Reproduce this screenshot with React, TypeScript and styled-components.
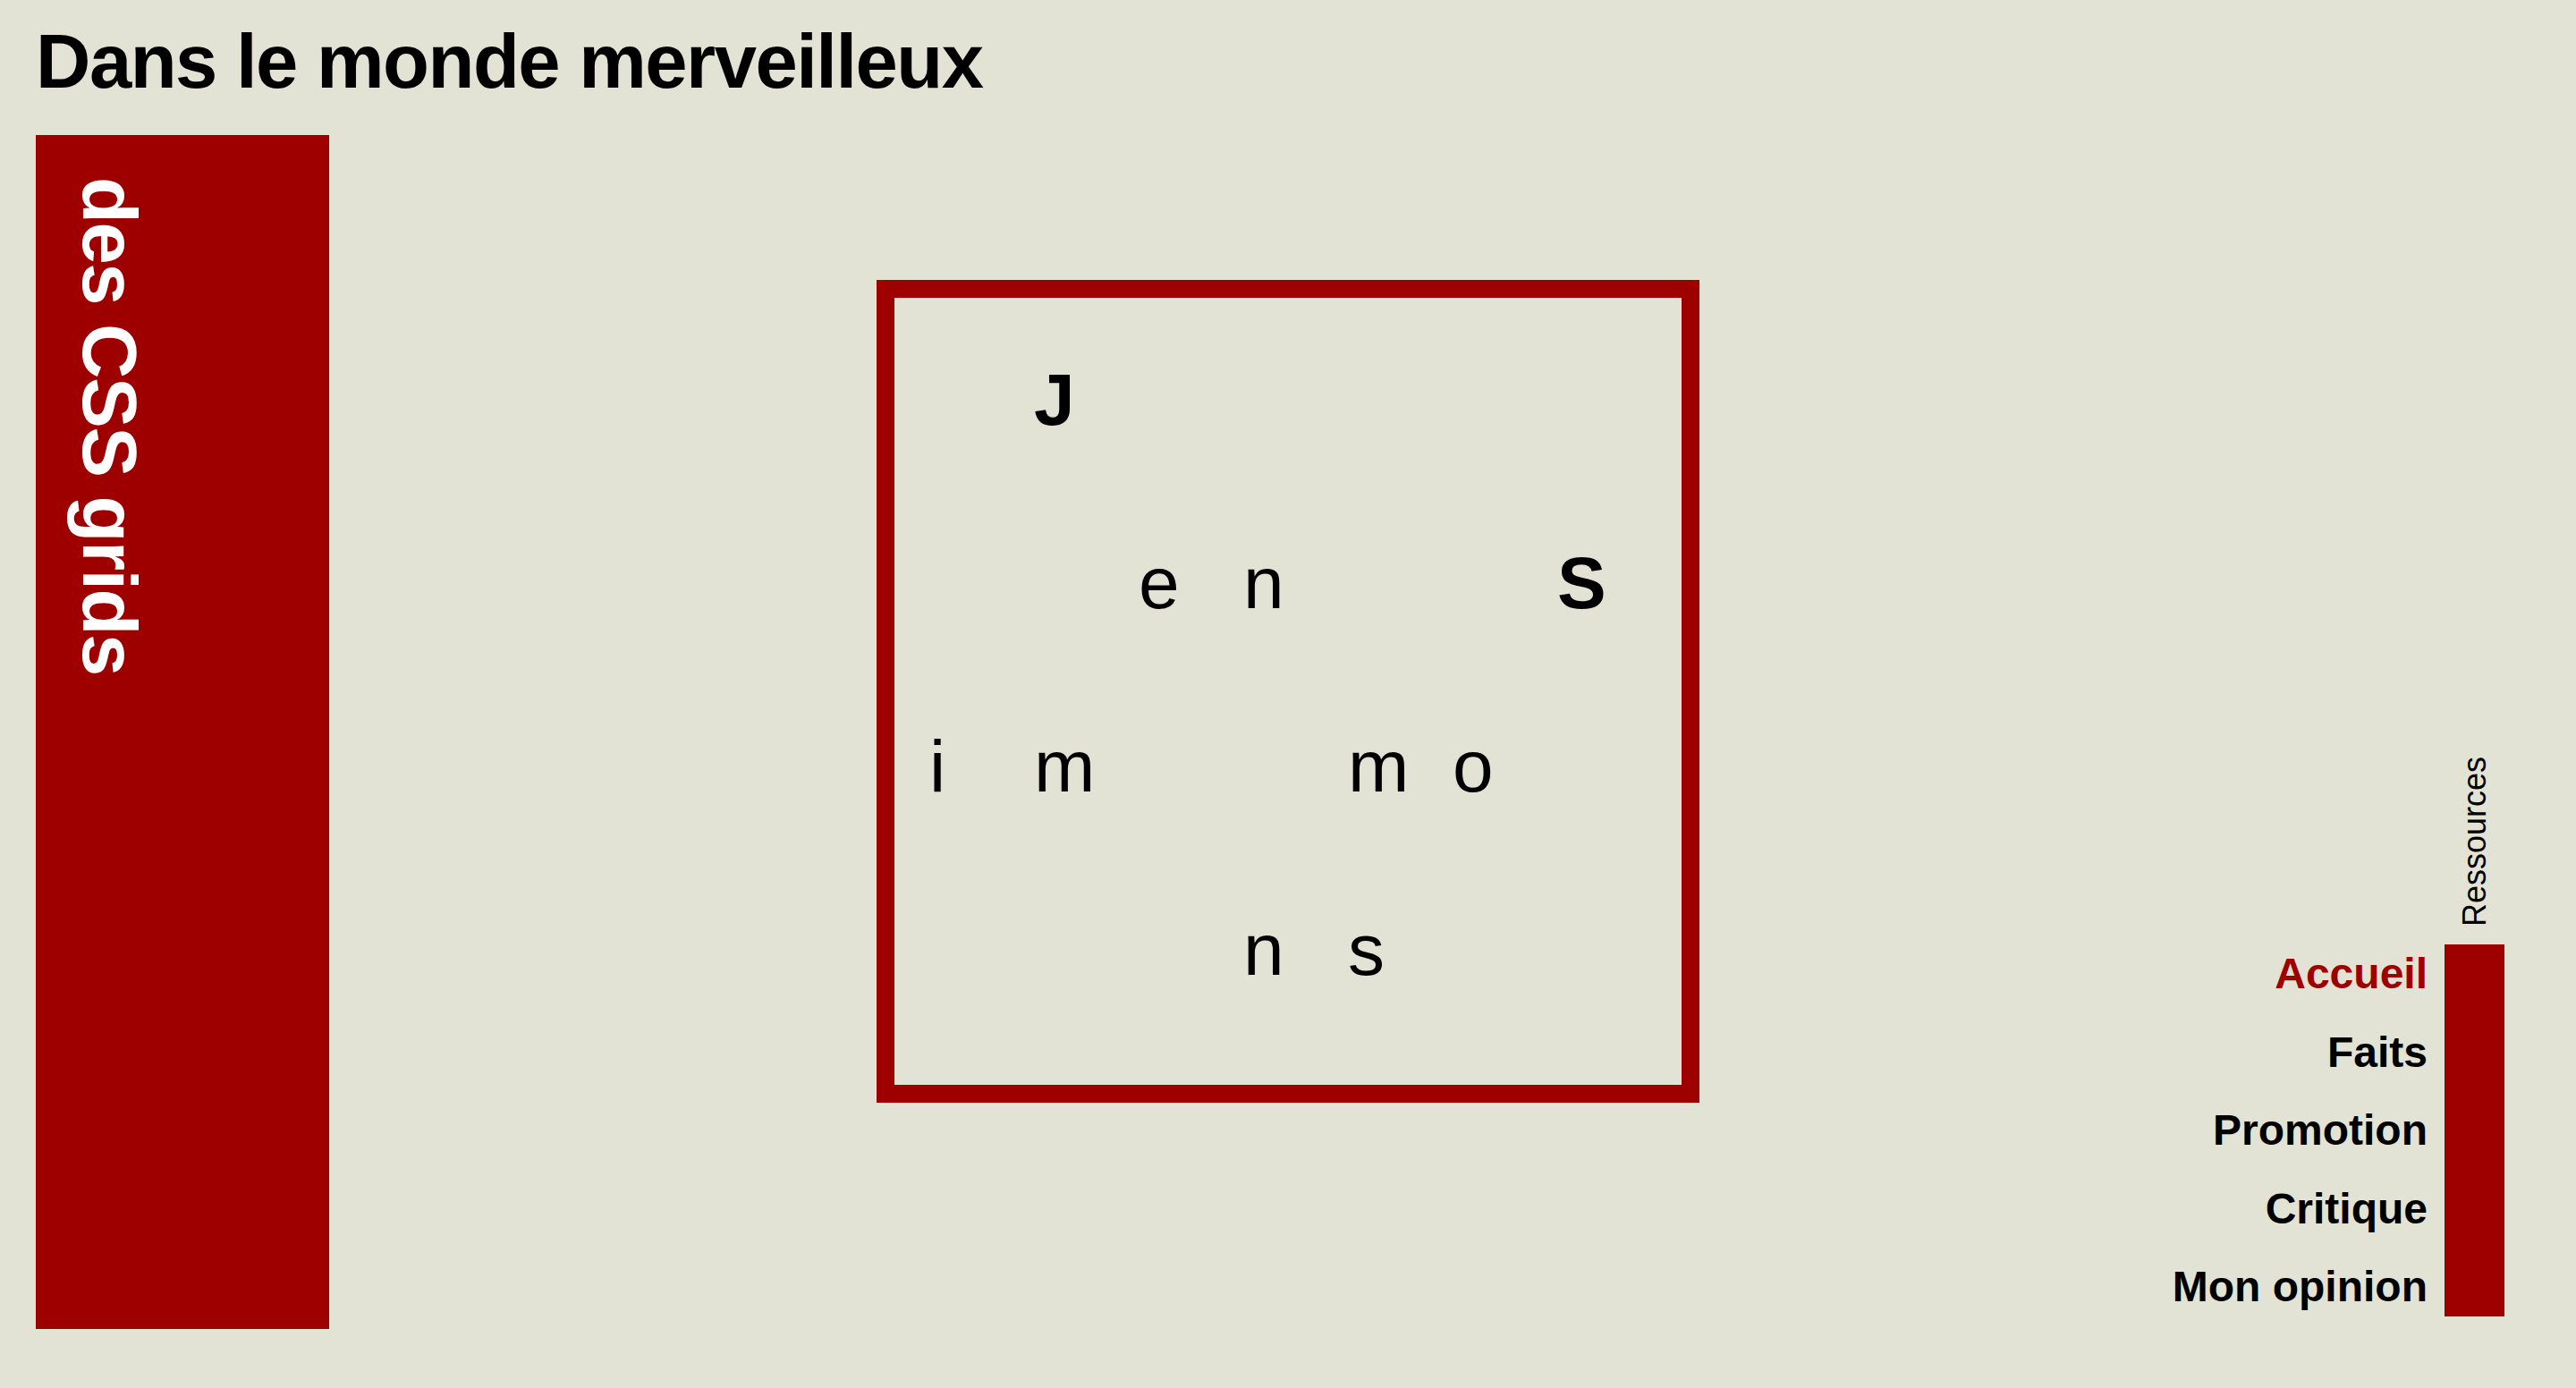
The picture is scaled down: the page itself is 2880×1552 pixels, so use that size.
import React from 'react';
import styled, { createGlobalStyle } from 'styled-components';

const RED = '#9e0000';
const PAPER = '#e3e3d5';

const GlobalStyle = createGlobalStyle`
  html, body {
    margin: 0;
    padding: 0;
    background: ${PAPER};
  }
  body {
    font-family: "Liberation Sans", Arial, Helvetica, sans-serif;
    color: #000;
  }
  * {
    box-sizing: border-box;
  }
`;

const Page = styled.div`
  min-height: 1552px;
  padding: 21px 40px 0 40px;
`;

const Title = styled.h1`
  margin: 0;
  font-size: 85px;
  line-height: 96px;
  font-weight: 700;
  letter-spacing: -1.5px;
`;

const Main = styled.main`
  display: grid;
  grid-template-columns: 1fr 920px 1fr;
  height: 1335px;
  margin-top: 34px;
`;

const SideBar = styled.aside`
  justify-self: start;
  width: 328px;
  background: ${RED};
  padding: 47px 0 0 34px;
  display: flex;
  align-items: flex-start;
`;

const SideTitle = styled.h2`
  margin: 0;
  writing-mode: vertical-rl;
  color: #fff;
  font-size: 85px;
  line-height: 96px;
  font-weight: 700;
  letter-spacing: -1.5px;
  white-space: nowrap;
`;

const LetterBox = styled.section`
  align-self: start;
  margin-top: 162px;
  width: 920px;
  height: 920px;
  border: 20px solid ${RED};
  padding: 11px 0 0 39px;
  display: grid;
  grid-template-columns: repeat(7, 117px);
  grid-template-rows: repeat(4, 205px);
`;

const Letter = styled.span<{ $col: number; $row: number; $bold?: boolean }>`
  grid-column: ${p => p.$col};
  grid-row: ${p => p.$row};
  font-size: 82px;
  line-height: 205px;
  font-weight: ${p => (p.$bold ? 700 : 400)};
`;

const Nav = styled.nav`
  grid-column: 3;
  justify-self: end;
  align-self: end;
  margin: 0 40px 14px 0;
  display: grid;
  grid-template-columns: auto 67px;
  grid-template-rows: auto 416px;
  column-gap: 19px;
  row-gap: 20px;
`;

const NavLabel = styled.span`
  grid-column: 2;
  grid-row: 1;
  justify-self: center;
  writing-mode: vertical-rl;
  transform: rotate(180deg);
  font-size: 36px;
  line-height: 40px;
  white-space: nowrap;
`;

const NavList = styled.ul`
  grid-column: 1;
  grid-row: 2;
  align-self: center;
  margin: 0;
  padding: 0;
  list-style: none;
  text-align: right;
`;

const NavItem = styled.li<{ $active?: boolean }>`
  font-size: 48px;
  line-height: 87.5px;
  font-weight: 700;
  white-space: nowrap;
  color: ${p => (p.$active ? RED : '#000')};
`;

const NavBar = styled.div`
  grid-column: 2;
  grid-row: 2;
  background: ${RED};
`;

const letters = [
  { ch: 'J', col: 2, row: 1, bold: true },
  { ch: 'e', col: 3, row: 2 },
  { ch: 'n', col: 4, row: 2 },
  { ch: 'S', col: 7, row: 2, bold: true },
  { ch: 'i', col: 1, row: 3 },
  { ch: 'm', col: 2, row: 3 },
  { ch: 'm', col: 5, row: 3 },
  { ch: 'o', col: 6, row: 3 },
  { ch: 'n', col: 4, row: 4 },
  { ch: 's', col: 5, row: 4 },
];

const navItems = ['Accueil', 'Faits', 'Promotion', 'Critique', 'Mon opinion'];

export default function App() {
  return (
    <>
      <GlobalStyle />
      <Page>
        <Title>Dans le monde merveilleux</Title>
        <Main>
          <SideBar>
            <SideTitle>des CSS grids</SideTitle>
          </SideBar>
          <LetterBox>
            {letters.map((l, i) => (
              <Letter key={i} $col={l.col} $row={l.row} $bold={l.bold}>
                {l.ch}
              </Letter>
            ))}
          </LetterBox>
          <Nav>
            <NavLabel>Ressources</NavLabel>
            <NavList>
              {navItems.map((item, i) => (
                <NavItem key={item} $active={i === 0}>
                  {item}
                </NavItem>
              ))}
            </NavList>
            <NavBar />
          </Nav>
        </Main>
      </Page>
    </>
  );
}
